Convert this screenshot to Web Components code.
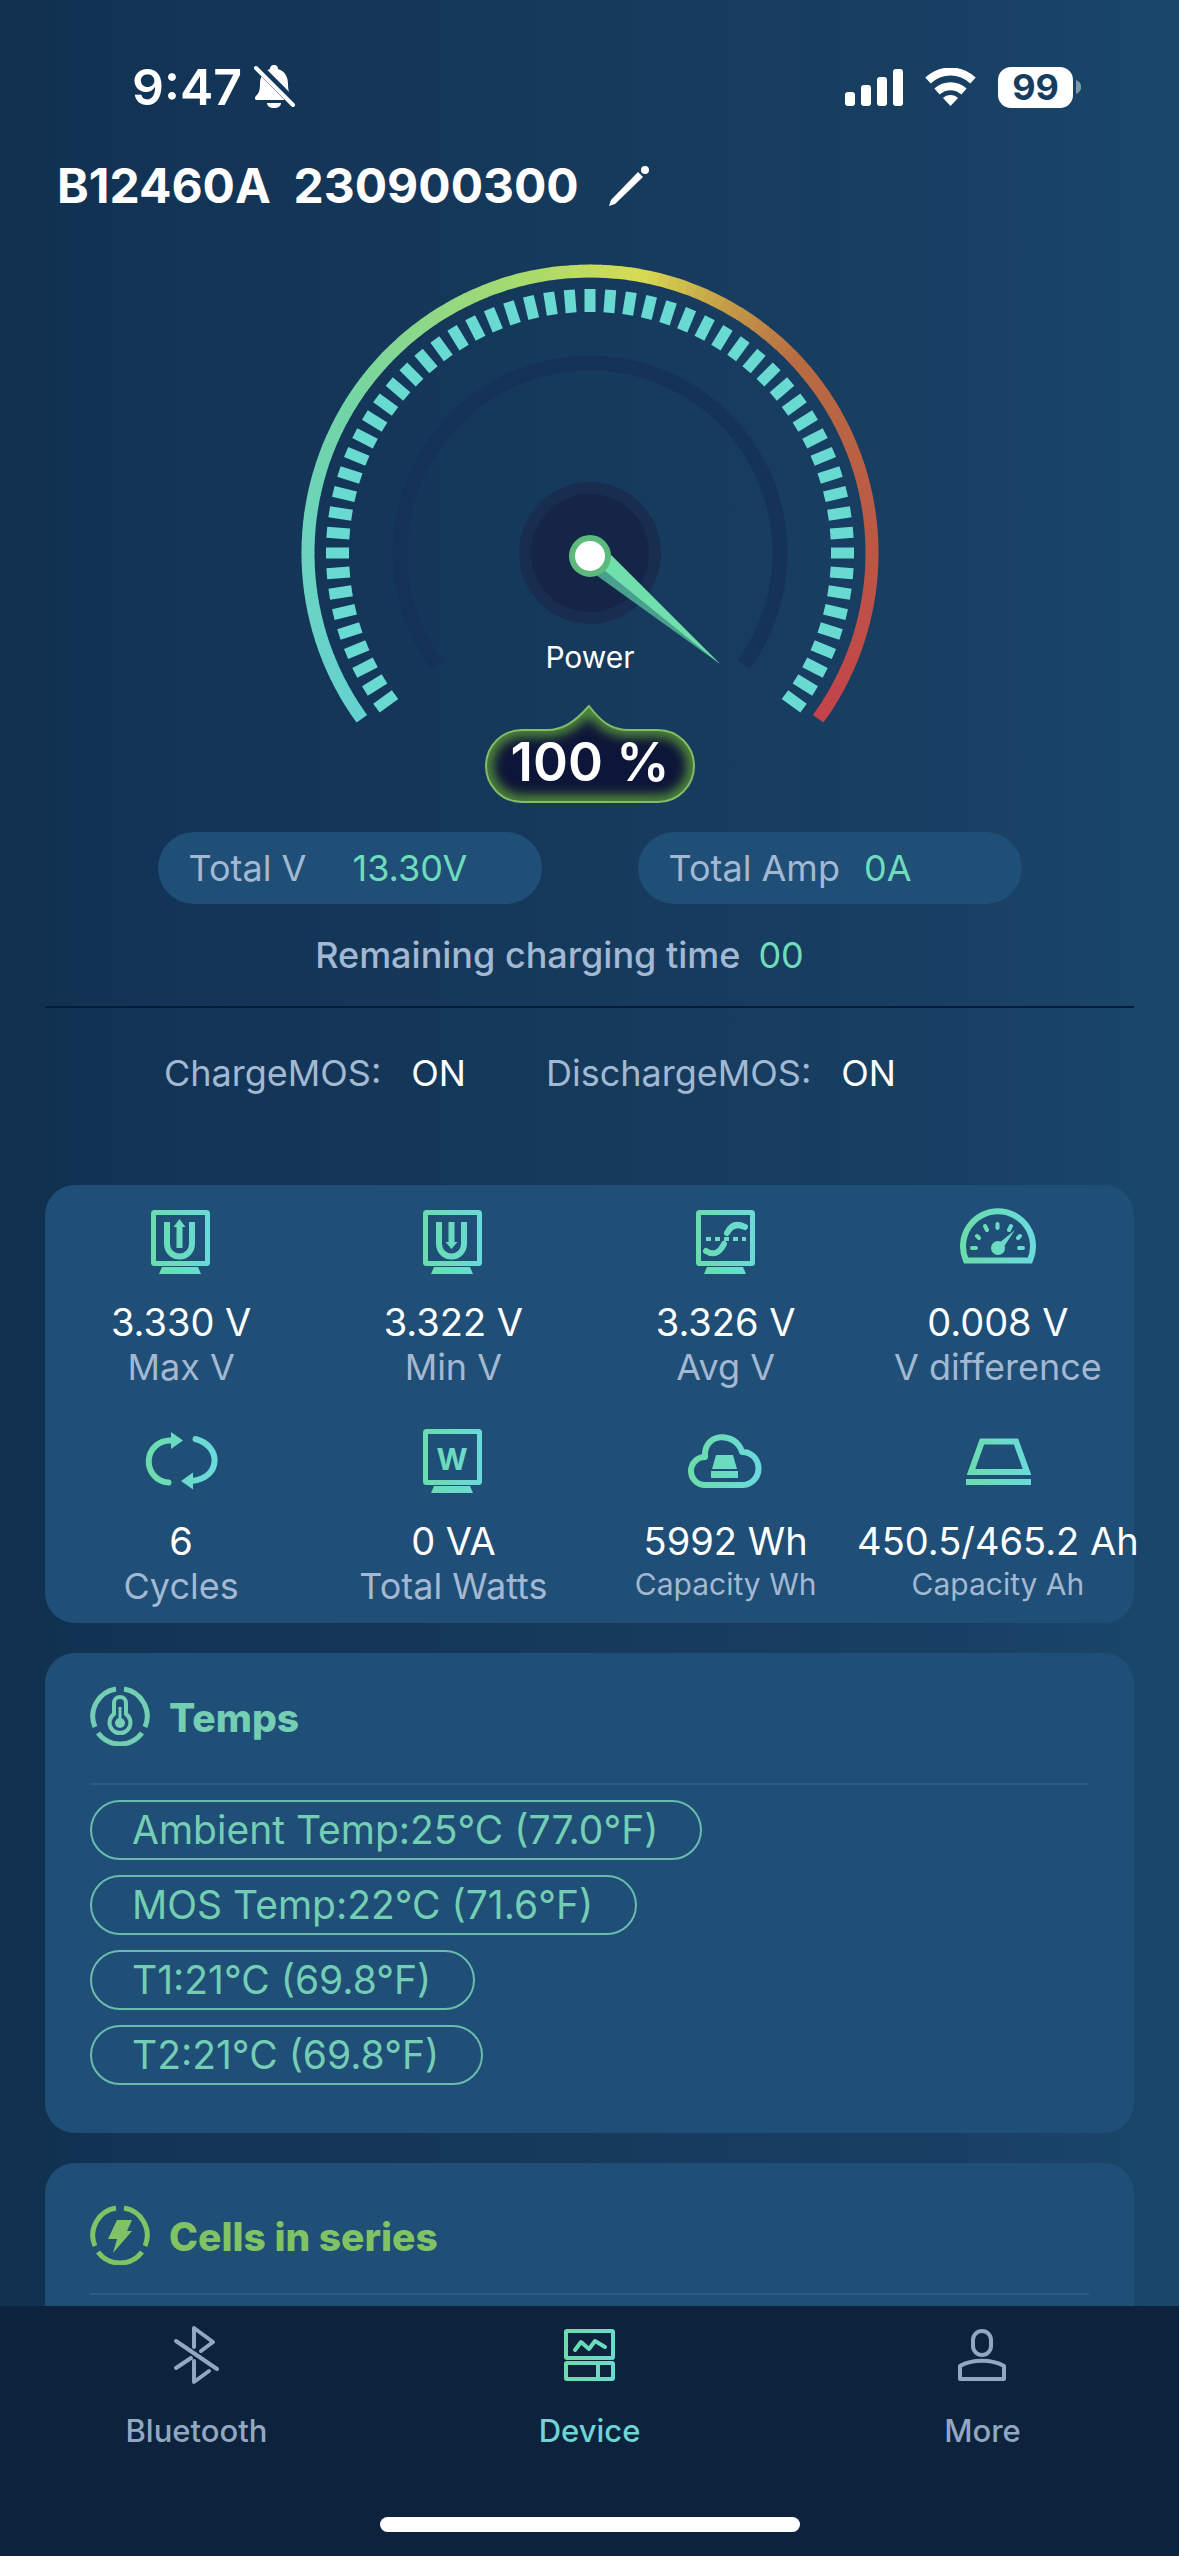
<!DOCTYPE html>
<html lang="en">
<head>
<meta charset="utf-8">
<meta name="viewport" content="width=device-width, initial-scale=1">
<title>Battery monitor</title>
<style>
    html, body {
        margin: 0;
        height: 100%;
    }

    body {
        font-family: Inter, "Liberation Sans", sans-serif;
        color: #fff;
        background: #16395c;
        --card: #1f4e76;
        --muted: #a3b8d2;
        --mint: #6fdcbc;
    }
</style>
</head>
<body>
<battery-app>
    <status-bar slot="status" time="9:47" battery="99"></status-bar>
    <device-title name="B12460A" serial="230900300"></device-title>
    <power-gauge label="Power" value="100"></power-gauge>
    <total-row>
        <total-pill label="Total V">13.30V</total-pill>
        <total-pill label="Total Amp">0A</total-pill>
    </total-row>
    <charge-time label="Remaining charging time">00</charge-time>
    <mos-row>
        <mos-state label="ChargeMOS:">ON</mos-state>
        <mos-state label="DischargeMOS:">ON</mos-state>
    </mos-row>
    <metric-grid>
        <metric-tile icon="max" label="Max V">3.330 V</metric-tile>
        <metric-tile icon="min" label="Min V">3.322 V</metric-tile>
        <metric-tile icon="avg" label="Avg V">3.326 V</metric-tile>
        <metric-tile icon="dial" label="V difference">0.008 V</metric-tile>
        <metric-tile icon="cycle" label="Cycles">6</metric-tile>
        <metric-tile icon="watt" label="Total Watts">0 VA</metric-tile>
        <metric-tile icon="cloud" label="Capacity Wh" small>5992 Wh</metric-tile>
        <metric-tile icon="tray" label="Capacity Ah" small>450.5/465.2 Ah</metric-tile>
    </metric-grid>
    <info-card heading="Temps" icon="temp">
        <temp-chip>Ambient Temp:25°C (77.0°F)</temp-chip>
        <temp-chip>MOS Temp:22°C (71.6°F)</temp-chip>
        <temp-chip>T1:21°C (69.8°F)</temp-chip>
        <temp-chip>T2:21°C (69.8°F)</temp-chip>
    </info-card>
    <info-card heading="Cells in series" icon="bolt"></info-card>
    <tab-bar slot="tabs">
        <tab-item icon="bluetooth" href="#bluetooth">Bluetooth</tab-item>
        <tab-item icon="device" href="#device" active>Device</tab-item>
        <tab-item icon="more" href="#more">More</tab-item>
    </tab-bar>
</battery-app>

<script>
(function() {
    'use strict';

    // Registers an element whose shadow root comes from a render function
    function define(tag, render) {
        customElements.define(tag, class extends HTMLElement {
            constructor() {
                super();
                this.attachShadow({ mode: 'open' });
            }

            connectedCallback() {
                this.shadowRoot.innerHTML = render(this);
            }
        });
    }

    const attr = (el, name) => el.getAttribute(name) || '';

    const gradient = `
        <defs>
            <linearGradient id="g" gradientUnits="userSpaceOnUse" x1="8" y1="0" x2="72" y2="0">
                <stop offset="0" stop-color="#6bdcab"/>
                <stop offset="1" stop-color="#6bdadb"/>
            </linearGradient>
        </defs>
    `;

    define('battery-app', () => `
        <style>
            :host {
                display: flex;
                flex-direction: column;
                height: 100%;
                background: linear-gradient(to right, #11304f, #123456 14%, #163a5c 50%, #183f63 80%, #19476b);
            }
            main {
                flex: 1;
                min-height: 0;
                overflow: hidden auto;
                scrollbar-width: none;
                padding: 0 45px;
            }
        </style>
        <slot name="status"></slot>
        <main><slot></slot></main>
        <slot name="tabs"></slot>
    `);

    define('status-bar', el => `
        <style>
            :host {
                display: flex;
                justify-content: space-between;
                align-items: center;
                padding: 60px 98px 0 132px;
                line-height: 54px;
            }
            div { display: flex; align-items: center; }
            .left { gap: 11px; font-size: 50px; font-weight: 600; }
            .right { gap: 22px; }
            .battery { gap: 3px; }
            .level {
                padding: 0 14px;
                border-radius: 13px;
                background: #fff;
                color: #163c5f;
                font-size: 36px;
                font-weight: 700;
                line-height: 41px;
            }
            svg { display: block; fill: #fff; }
        </style>
        <div class="left">
            <time>${attr(el, 'time')}</time>
            <svg width="44" height="46" viewBox="0 0 44 46">
                <path d="M21 1c3 0 4 2 4 4c7 2 10 8 10 15c0 6 1 9 4 12c2 2 1 4-1 4H4c-2 0-3-2-1-4c3-3 4-6 4-12c0-7 3-13 10-15c0-2 1-4 4-4z"/>
                <path d="M14 39h14c0 3-3 5-7 5s-7-2-7-5z"/>
                <path d="M2 0L44 42" fill="none" stroke="#123558" stroke-width="9"/>
                <path d="M3 4L40 41" fill="none" stroke="#fff" stroke-width="4" stroke-linecap="round"/>
            </svg>
        </div>
        <div class="right">
            <svg width="58" height="38" viewBox="0 0 58 38">
                <rect x="0" y="24" width="10" height="14" rx="3"/>
                <rect x="16" y="17" width="10" height="21" rx="3"/>
                <rect x="32" y="9" width="10" height="29" rx="3"/>
                <rect x="48" y="1" width="10" height="37" rx="3"/>
            </svg>
            <svg width="51" height="38" viewBox="0 0 51 38">
                <path d="M25.500 38l-7.500-8c4-4 11-4 15 0z"/>
                <path d="M12 23.500c8-7 19-7 27 0" fill="none" stroke="#fff" stroke-width="8"/>
                <path d="M3 12.500c13-12 32-12 45 0" fill="none" stroke="#fff" stroke-width="8"/>
            </svg>
            <div class="battery">
                <span class="level">${attr(el, 'battery')}</span>
                <svg width="5" height="14" viewBox="0 0 5 14"><path d="M0 0c7 3 7 11 0 14z" opacity=".45"/></svg>
            </div>
        </div>
    `);

    define('device-title', el => `
        <style>
            :host { display: block; padding: 42px 12px 0; }
            div { display: flex; align-items: center; gap: 28px; }
            h1 {
                margin: 0;
                font-size: 48px;
                font-weight: 700;
                line-height: 60px;
                white-space: pre;
            }
            button {
                display: flex;
                padding: 0;
                border: 0;
                background: none;
                cursor: pointer;
            }
        </style>
        <div>
            <h1>${attr(el, 'name')}  ${attr(el, 'serial')}</h1>
            <button aria-label="Rename device">
                <svg width="44" height="44" viewBox="0 0 44 44" fill="#fff">
                    <path d="M31 8L36 13L8 40L2 42L4 36z"/>
                    <circle cx="38" cy="6" r="4"/>
                </svg>
            </button>
        </div>
    `);

    class PowerGauge extends HTMLElement {
        constructor() {
            super();
            this.attachShadow({ mode: 'open' });
        }

        static get stops() {
            return [
                [-126, 101, 210, 207],
                [-90, 107, 211, 192],
                [-60, 115, 213, 166],
                [-38, 140, 216, 138],
                [-12, 170, 219, 106],
                [9, 215, 220, 82],
                [28, 196, 156, 72],
                [46, 184, 108, 66],
                [90, 188, 86, 70],
                [126, 196, 66, 74]
            ];
        }

        connectedCallback() {
            this.render();
        }

        colorAt(angle) {
            const stops = PowerGauge.stops;
            let i = 1;
            while (i < stops.length - 1 && stops[i][0] < angle) i++;
            const [a, b] = [stops[i - 1], stops[i]];
            const t = Math.min(1, (angle - a[0]) / (b[0] - a[0]));
            const mix = n => Math.round(a[n] + (b[n] - a[n]) * t);
            return `rgb(${mix(1)},${mix(2)},${mix(3)})`;
        }

        arc(radius, from, to) {
            const point = deg => {
                const rad = deg * Math.PI / 180;
                return `${(300 + radius * Math.sin(rad)).toFixed(2)} ${(300 - radius * Math.cos(rad)).toFixed(2)}`;
            };
            return `M${point(from)}A${radius} ${radius} 0 ${to - from > 180 ? 1 : 0} 1 ${point(to)}`;
        }

        render() {
            let rim = '';
            for (let a = -126; a < 126; a += 2) {
                rim += `<path d="${this.arc(282, a, Math.min(126, a + 2.2))}" stroke="${this.colorAt(a)}"/>`;
            }
            let ticks = '';
            for (let i = -28; i <= 28; i++) {
                ticks += `<rect x="294.500" y="36" width="11" height="23" transform="rotate(${i * 4.5} 300 300)"/>`;
            }
            const badge = 'M232 477H257C272 477 284 470 299 453C312 470 322 477 339 477H368A36 36 0 0 1 368 549H232A36 36 0 0 1 232 477Z';

            this.shadowRoot.innerHTML = `
                <style>
                    :host { display: flex; justify-content: center; margin-top: 37px; }
                    svg { display: block; font-family: inherit; }
                    text { fill: #fff; text-anchor: middle; }
                    .label { font-size: 30px; }
                    .value { font-size: 53px; font-weight: 600; }
                </style>
                <svg width="600" height="555" viewBox="0 0 600 555">
                    <defs>
                        <clipPath id="badge"><path d="${badge}"/></clipPath>
                        <filter id="glow" x="-20%" y="-20%" width="140%" height="140%">
                            <feGaussianBlur stdDeviation="6"/>
                        </filter>
                        <linearGradient id="track" x1="0" x2="1">
                            <stop offset="0" stop-color="#143257"/>
                            <stop offset="1" stop-color="#153257"/>
                        </linearGradient>
                    </defs>
                    <g fill="none" stroke-width="13">${rim}</g>
                    <g fill="#69dad2">${ticks}</g>
                    <path d="${this.arc(190, -126, 126)}" fill="none" stroke="url(#track)" stroke-width="15"/>
                    <circle cx="300" cy="300" r="71" fill="#192d51"/>
                    <circle cx="300" cy="300" r="59" fill="#142547"/>
                    <path d="M318 299L430 411L306 322z" fill="#48a18e"/>
                    <path d="M321 302L430 411L314 317z" fill="#71dfac"/>
                    <circle cx="300" cy="303" r="18" fill="#fff" stroke="#5bba7c" stroke-width="6"/>
                    <text class="label" x="300" y="415">${attr(this, 'label')}</text>
                    <path d="${badge}" fill="#0d1638"/>
                    <g clip-path="url(#badge)">
                        <path d="${badge}" fill="none" stroke="#5c9c3a" stroke-width="12" filter="url(#glow)"/>
                    </g>
                    <path d="${badge}" fill="none" stroke="#82bd66" stroke-width="2"/>
                    <text class="value" x="300" y="528">${attr(this, 'value')} %</text>
                </svg>
            `;
        }
    }
    customElements.define('power-gauge', PowerGauge);

    define('total-row', () => `
        <style>
            :host { display: flex; justify-content: center; gap: 96px; margin-top: 24px; }
        </style>
        <slot></slot>
    `);

    define('total-pill', el => `
        <style>
            :host {
                box-sizing: border-box;
                display: flex;
                gap: 24px;
                width: 384px;
                padding: 0 31px;
                border-radius: 36px;
                background: var(--card);
                font-size: 36px;
                line-height: 72px;
                white-space: nowrap;
            }
            .label { min-width: 140px; color: var(--muted); }
            .value { color: var(--mint); }
        </style>
        <span class="label">${attr(el, 'label')}</span>
        <span class="value"><slot></slot></span>
    `);

    define('charge-time', el => `
        <style>
            :host {
                display: flex;
                justify-content: center;
                gap: 18px;
                margin: 27px 0 0;
                padding: 0 60px 27px 0;
                font-size: 36px;
                line-height: 48px;
            }
            .label { color: var(--muted); font-weight: 500; }
            .value { color: var(--mint); }
        </style>
        <span class="label">${attr(el, 'label')}</span>
        <span class="value"><slot></slot></span>
    `);

    define('mos-row', () => `
        <style>
            :host {
                display: flex;
                gap: 80px;
                padding: 41px 0 88px 119px;
                border-top: 2px solid #061c3c;
            }
        </style>
        <slot></slot>
    `);

    define('mos-state', el => `
        <style>
            :host { display: flex; gap: 30px; font-size: 36px; line-height: 48px; }
            .label { color: var(--muted); }
        </style>
        <span class="label">${attr(el, 'label')}</span>
        <span><slot></slot></span>
    `);

    define('metric-grid', () => `
        <style>
            :host {
                display: grid;
                grid-template-columns: repeat(4, minmax(0, 1fr));
                border-radius: 30px;
                background: var(--card);
            }
        </style>
        <slot></slot>
    `);

    const screen = `
        <rect x="12.500" y="10.500" width="54" height="51" rx="1" fill="none" stroke="url(#g)" stroke-width="5"/>
        <path d="M21 65h36l3 7H18z"/>
    `;

    const metricIcons = {
        max: `${screen}
            <path d="M26 20v22a12.500 12.500 0 0 0 25 0V20" fill="none" stroke="url(#g)" stroke-width="6"/>
            <path d="M38.500 17l6 8h-3v21h-6V25h-3z"/>`,
        min: `${screen}
            <path d="M26 20v22a12.500 12.500 0 0 0 25 0V20" fill="none" stroke="url(#g)" stroke-width="6"/>
            <path d="M38.500 47l6-7h-3V20h-6v20h-3z"/>`,
        avg: `${screen}
            <path d="M20 37h40" fill="none" stroke="#6bdcc3" stroke-width="4" stroke-dasharray="5 4"/>
            <path d="M20 49q11 7 18-7M41 31q6-12 18-6" fill="none" stroke="url(#g)" stroke-width="6" stroke-linecap="round"/>`,
        dial: `
            <path d="M8 58.500A35 35 0 1 1 72 58.500z" fill="none" stroke="url(#g)" stroke-width="6"/>
            <path d="M14 46h4M19 34l2 2M27 24l2 4M39.500 22v4M53 24l-2 4M62 34l-2 2M65 46h-4" fill="none" stroke="url(#g)" stroke-width="4" stroke-linecap="round"/>
            <circle cx="40" cy="46" r="7"/>
            <path d="M40 42L57 28L45 46z"/>`,
        cycle: `
            <path d="M30 19.500A21 21 0 0 0 27.500 61.500M54.500 18C81 25 80 57 51 60" fill="none" stroke="url(#g)" stroke-width="6" stroke-linecap="round"/>
            <path d="M30 11l12 8.500l-12 8.500zM52 51.500L40 60l12 8.500z"/>`,
        watt: `${screen}
            <text x="39" y="49" text-anchor="middle" font-size="30" font-weight="700">W</text>`,
        cloud: `
            <path d="M19 64A14 14 0 0 1 19 36C17 11 50 10 56 31A16 16.500 0 0 1 57 64z" fill="none" stroke="url(#g)" stroke-width="6" stroke-linejoin="round"/>
            <path d="M30 34h17l4 14H26zM25 50h27v7H25z"/>`,
        tray: `
            <path d="M24 20.500h34l11 30.500H13z" fill="none" stroke="url(#g)" stroke-width="6"/>
            <path d="M8 58h65v6H8z"/>`
    };

    define('metric-tile', el => `
        <style>
            :host {
                display: flex;
                flex-direction: column;
                align-items: center;
                height: 219px;
                box-sizing: border-box;
                padding-top: 17px;
                white-space: nowrap;
            }
            svg { display: block; flex: none; margin-bottom: 17px; font-family: inherit; }
            .value { font-size: 38px; line-height: 46px; }
            .label { font-size: 36px; line-height: 44px; color: var(--muted); }
            :host([small]) .label { font-size: 30px; line-height: 40px; }
        </style>
        <svg width="80" height="80" viewBox="0 0 80 80" fill="url(#g)">${gradient}${metricIcons[attr(el, 'icon')]}</svg>
        <span class="value"><slot></slot></span>
        <span class="label">${attr(el, 'label')}</span>
    `);

    const ring = '<path d="M26 3A27.500 27.500 0 0 0 5 41M34 3A27.500 27.500 0 0 1 55 41M8 47A27.500 27.500 0 0 0 52 47" fill="none" stroke="currentColor" stroke-width="5"/>';

    const cardIcons = {
        temp: `${ring}
            <path d="M24 28V17a6 6 0 0 1 12 0v11a10.500 10.500 0 1 1-12 0z" fill="none" stroke="currentColor" stroke-width="4"/>
            <path d="M30 21v16" stroke="currentColor" stroke-width="3"/>
            <circle cx="30" cy="37" r="5" fill="currentColor"/>`,
        bolt: `${ring}
            <path d="M27 15h15l-5 11h5L23 48l4-14h-9z" fill="currentColor"/>`
    };

    define('info-card', el => `
        <style>
            :host {
                --accent: #74ceb4;
                --offset: 33px;
                display: block;
                margin-top: 30px;
                padding: 0 45px 48px;
                border-radius: 30px;
                background: var(--card);
                color: var(--accent);
            }
            :host([icon="bolt"]) { --accent: #80c365; --offset: 42px; }
            header {
                box-sizing: border-box;
                display: flex;
                align-items: flex-start;
                gap: 19px;
                height: 132px;
                padding-top: var(--offset);
                border-bottom: 2px solid #2b5b83;
            }
            h2 { margin: 0; font-size: 39px; font-weight: 800; line-height: 64px; }
            .chips {
                display: flex;
                flex-direction: column;
                align-items: flex-start;
                gap: 15px;
                padding-top: 15px;
            }
        </style>
        <header>
            <svg width="60" height="60" viewBox="0 0 60 60">${cardIcons[attr(el, 'icon')]}</svg>
            <h2>${attr(el, 'heading')}</h2>
        </header>
        <div class="chips"><slot></slot></div>
    `);

    define('temp-chip', () => `
        <style>
            :host {
                display: block;
                padding: 0 42px 0 40px;
                border: 2px solid #69bcae;
                border-radius: 30px;
                font-size: 39px;
                line-height: 56px;
                white-space: nowrap;
            }
        </style>
        <slot></slot>
    `);

    define('tab-bar', () => `
        <style>
            :host { display: block; background: #0c223d; }
            nav { display: flex; height: 211px; }
            .home {
                width: 420px;
                height: 15px;
                margin: 0 auto 24px;
                border-radius: 8px;
                background: #fff;
            }
        </style>
        <nav><slot></slot></nav>
        <div class="home"></div>
    `);

    const tabIcons = {
        bluetooth: '<path d="M9 16L50 44M27 22V3L46 17L34 26M9 43L24 33M27 36V57L42 46"/>',
        device: `
            <rect x="6" y="6" width="47" height="27" rx="1"/>
            <rect x="6" y="38" width="47" height="16" rx="1"/>
            <path d="M38 38v16M15 25L21 17L29 24L35 16L45 22"/>`,
        more: `
            <rect x="20" y="6" width="18" height="24" rx="9"/>
            <path d="M7 54V41C19 34 39 34 51 41V54z"/>`
    };

    define('tab-item', el => `
        <style>
            :host { flex: 1; color: #92a8c1; }
            :host([active]) { color: #6dd6d5; }
            a {
                display: flex;
                flex-direction: column;
                align-items: center;
                gap: 26px;
                padding-top: 19px;
                color: inherit;
                font-size: 31px;
                font-weight: 500;
                line-height: 40px;
                text-decoration: none;
            }
            svg {
                display: block;
                fill: none;
                stroke: currentColor;
                stroke-width: 4px;
                stroke-linecap: round;
                stroke-linejoin: round;
            }
            :host([active]) svg { stroke: url(#g); }
        </style>
        <a href="${attr(el, 'href')}">
            <svg width="60" height="60" viewBox="0 0 60 60">${gradient}${tabIcons[attr(el, 'icon')]}</svg>
            <span><slot></slot></span>
        </a>
    `);
})();
</script>
</body>
</html>
